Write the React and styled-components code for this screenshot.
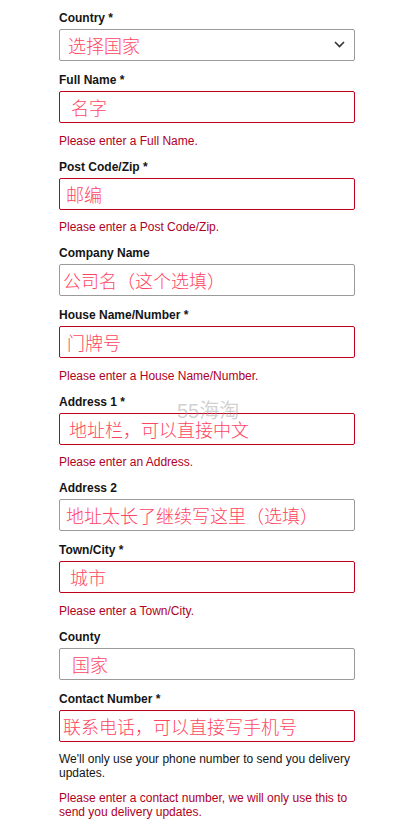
import styled, { createGlobalStyle } from "styled-components";

const GlobalStyle = createGlobalStyle`
  body {
    margin: 0;
    background: #fff;
    font-family: "Liberation Sans", Arial, sans-serif;
  }
`;

const Form = styled.form`
  width: 296px;
  padding: 11px 0 0 59px;
`;

const Field = styled.div`
  position: relative;
  display: flex;
  flex-direction: column;
  margin-bottom: 12px;
`;

const Label = styled.label`
  font-size: 12px;
  line-height: 14px;
  font-weight: 700;
  color: #151515;
  margin-bottom: 4px;
`;

const Input = styled.input`
  box-sizing: border-box;
  width: 100%;
  height: 32px;
  margin: 0;
  padding: 0 0 0 ${(props) => props.$indent}px;
  border: 1px solid ${(props) => (props.$error ? "#c0001c" : "#9a9a9a")};
  border-radius: 2px;
  background: #fff;
  font-family: "Noto Sans CJK SC", sans-serif;
  font-size: 18px;
  font-weight: 300;
  outline: none;

  &::placeholder {
    color: #ff4561;
    opacity: 1;
  }
`;

const SelectWrap = styled.div`
  position: relative;
`;

const Select = styled.select`
  box-sizing: border-box;
  appearance: none;
  width: 100%;
  height: 32px;
  margin: 0;
  padding: 0 0 0 ${(props) => props.$indent}px;
  border: 1px solid #9a9a9a;
  border-radius: 2px;
  background: #fff;
  color: #ff4561;
  font-family: "Noto Sans CJK SC", sans-serif;
  font-size: 18px;
  font-weight: 300;
  outline: none;
`;

const Chevron = styled.svg`
  position: absolute;
  right: 10px;
  top: 12px;
  pointer-events: none;
`;

const Error = styled.p`
  margin: 10.5px 0 0;
  font-size: 12px;
  line-height: 14px;
  color: #b0001e;
`;

const Hint = styled.p`
  margin: 10.5px 0 0;
  font-size: 12px;
  line-height: 14px;
  color: #151515;
`;

const Watermark = styled.span`
  position: absolute;
  left: 118px;
  top: 6px;
  font-family: "Liberation Sans", "Noto Sans CJK SC", sans-serif;
  font-size: 20px;
  line-height: 20px;
  color: rgba(150, 150, 150, 0.45);
  pointer-events: none;
`;

const fields = [
  { label: "Full Name *", text: "名字", indent: 11, error: "Please enter a Full Name." },
  { label: "Post Code/Zip *", text: "邮编", indent: 6, error: "Please enter a Post Code/Zip." },
  { label: "Company Name", text: "公司名（这个选填）", indent: 3 },
  { label: "House Name/Number *", text: "门牌号", indent: 7, error: "Please enter a House Name/Number." },
  { label: "Address 1 *", text: "地址栏，可以直接中文", indent: 9, error: "Please enter an Address.", mark: true },
  { label: "Address 2", text: "地址太长了继续写这里（选填）", indent: 6 },
  { label: "Town/City *", text: "城市", indent: 10, error: "Please enter a Town/City." },
  { label: "County", text: "国家", indent: 12 },
];

export default function App() {
  return (
    <>
      <GlobalStyle />
      <Form>
        <Field>
          <Label>Country *</Label>
          <SelectWrap>
            <Select $indent={8} defaultValue="">
              <option value="">选择国家</option>
            </Select>
            <Chevron width="11" height="7" viewBox="0 0 11 7">
              <path d="M1 1l4.5 4.5L10 1" fill="none" stroke="#333" strokeWidth="1.6" />
            </Chevron>
          </SelectWrap>
        </Field>

        {fields.map((f) => (
          <Field key={f.label}>
            <Label>{f.label}</Label>
            <Input placeholder={f.text} $indent={f.indent} $error={!!f.error} />
            {f.error && <Error>{f.error}</Error>}
            {f.mark && <Watermark>55海淘</Watermark>}
          </Field>
        ))}

        <Field>
          <Label>Contact Number *</Label>
          <Input placeholder="联系电话，可以直接写手机号" $indent={3} $error />
          <Hint>We'll only use your phone number to send you delivery updates.</Hint>
          <Error>Please enter a contact number, we will only use this to send you delivery updates.</Error>
        </Field>
      </Form>
    </>
  );
}
